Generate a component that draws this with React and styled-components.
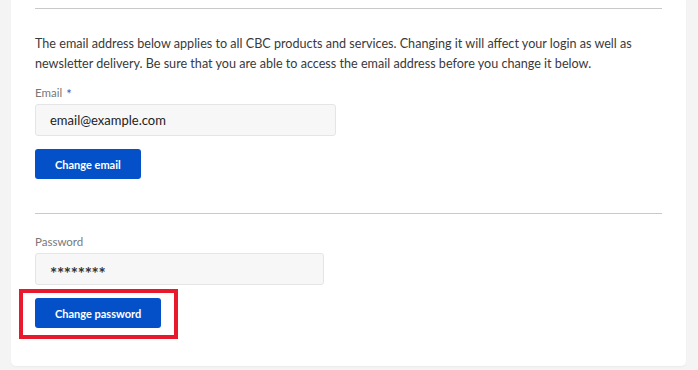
import React from "react";
import styled, { createGlobalStyle } from "styled-components";

const GlobalStyle = createGlobalStyle`
  html, body {
    margin: 0;
    padding: 0;
    background: #f4f4f4;
  }
  body {
    font-family: Lato, "Liberation Sans", sans-serif;
    color: #333;
  }
`

const Page = styled.div`
  padding: 0 12px 5px 11px;
`

const Card = styled.section`
  background: #fff;
  border-radius: 0 0 5px 5px;
  padding: 8px 24px 38px;
  box-shadow: 0 1px 2px rgba(0, 0, 0, 0.04);
`

const Divider = styled.hr`
  border: 0;
  border-top: 1px solid #c9c9c9;
  margin: ${p => p.top || 0}px 0 ${p => p.gap}px;
`

const Intro = styled.p`
  margin: 0 0 12px;
  font-size: 12.6px;
  line-height: 20px;
  color: #3a3a3a;
`

const Field = styled.div`
  display: flex;
  flex-direction: column;
  gap: 4px;
`

const Label = styled.label`
  display: block;
  height: 14px;
  font-size: 11.5px;
  line-height: 14px;
  color: #787878;

  span {
    color: #2f5fc4;
    margin-left: 4px;
    font-size: 13px;
    line-height: 0;
    vertical-align: -2px;
  }
`

const Input = styled.input`
  box-sizing: border-box;
  width: ${p => p.width}px;
  height: 32px;
  padding: 0 14px;
  background: #f7f7f7;
  border: 1px solid #e5e5e5;
  border-radius: 3px;
  font-family: inherit;
  font-size: 13px;
  color: #222;
  outline: none;
`

const SecretInput = styled(Input)`
  padding-top: 9px;
  font-size: 17px;
  font-weight: 700;
  letter-spacing: -0.3px;
  color: #333;
`

const ButtonRow = styled.div`
  position: relative;
  display: flex;
  margin-top: 13px;
`

const Button = styled.button`
  height: 30px;
  padding: 0 20px;
  background: #0450c8;
  color: #fff;
  border: 0;
  border-radius: 3px;
  font-family: inherit;
  font-weight: 700;
  font-size: 11px;
  cursor: pointer;
`

const Highlight = styled.div`
  position: absolute;
  left: -16px;
  top: -9px;
  width: 159px;
  height: 50px;
  box-sizing: border-box;
  border: 4px solid #e8192c;
  pointer-events: none;
`

export default function App() {
  return (
    <Page>
      <GlobalStyle />
      <Card>
        <Divider gap={25} />
        <Intro>
          The email address below applies to all CBC products and services. Changing it will affect your login as well as
          newsletter delivery. Be sure that you are able to access the email address before you change it below.
        </Intro>
        <Field>
          <Label>Email<span>*</span></Label>
          <Input width={301} defaultValue="email@example.com" readOnly />
        </Field>
        <ButtonRow>
          <Button>Change email</Button>
        </ButtonRow>
        <Divider top={34} gap={21} />
        <Field>
          <Label>Password</Label>
          <SecretInput width={289} defaultValue="********" readOnly />
        </Field>
        <ButtonRow>
          <Button>Change password</Button>
          <Highlight />
        </ButtonRow>
      </Card>
    </Page>
  );
}
